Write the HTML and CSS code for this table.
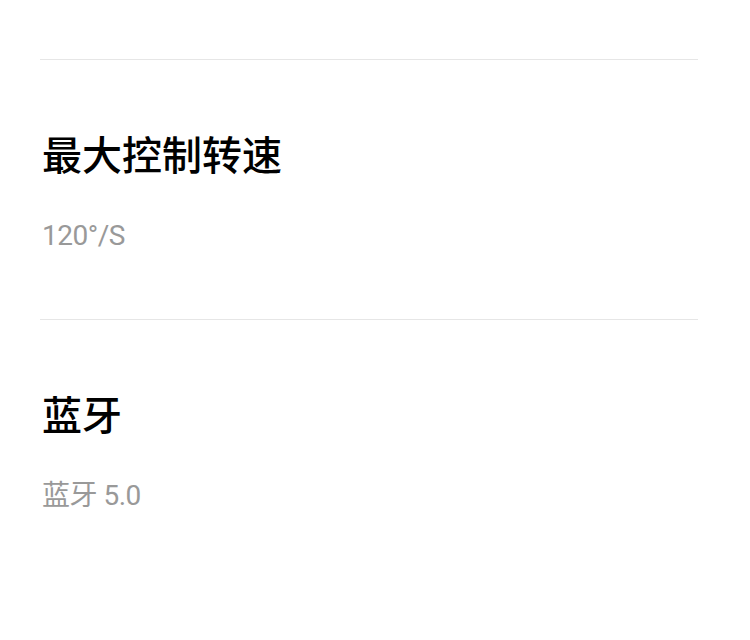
FILE: index.html
```html
<!DOCTYPE html>
<html lang="zh">
<head>
<meta charset="utf-8">
<link rel="stylesheet" href="styles.css">
</head>
<body>
<div class="list">
  <div class="item">
    <div class="title">最大控制转速</div>
    <div class="value">120°/S</div>
  </div>
  <div class="item">
    <div class="title">蓝牙</div>
    <div class="value">蓝牙 5.0</div>
  </div>
</div>
</body>
</html>
```
FILE: styles.css
```css
html, body {
  margin: 0;
  padding: 0;
  background: #ffffff;
}
body {
  font-family: Roboto, "Noto Sans CJK SC", sans-serif;
}
.list {
  padding: 59px 52px 0 40px;
}
.item {
  border-top: 1px solid #e6e6e6;
  padding: 65px 0 63px 2px;
}
.title {
  font-size: 40px;
  line-height: 56px;
  color: #000000;
  font-family: "Noto Sans CJK SC", sans-serif;
  font-weight: 500;
}
.value {
  margin-top: 35px;
  font-size: 28px;
  line-height: 40px;
  color: #999999;
  font-weight: 400;
  letter-spacing: -0.5px;
}
```
